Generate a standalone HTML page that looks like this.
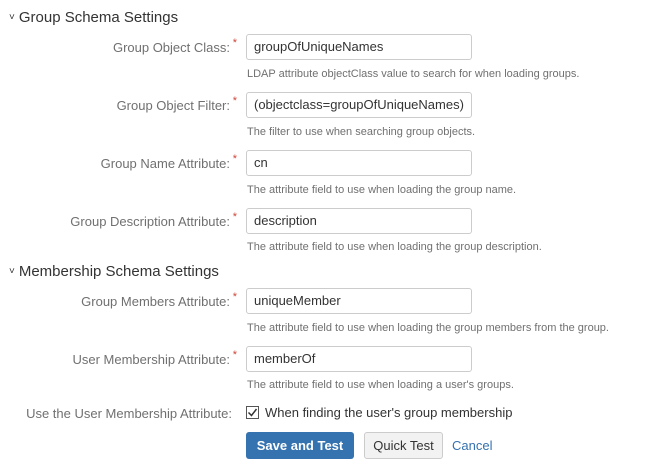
<!DOCTYPE html>
<html><head><style>
body{margin:0;width:659px;height:473px;background:#fff;font-family:"Liberation Sans",Arial,sans-serif;position:relative;overflow:hidden}
.h{position:absolute;left:9px;font-size:15px;color:#333}
.h span{font-size:10px;margin-right:4px;position:relative;top:-2px}
.l{position:absolute;right:429px;font-size:13px;color:#707070;text-align:right;white-space:nowrap}
.l sup{color:#d04437;font-size:11px;position:absolute;right:-7px;top:-3px}
.i{position:absolute;left:246px;width:217px;height:24px;border:1px solid #ccc;border-radius:3px;font-size:13px;color:#333;line-height:24px;padding-left:7px}
.d{position:absolute;left:247px;font-size:11px;color:#707070}
</style></head><body>
<div class="h" style="top:9px"><span>˅</span>Group Schema Settings</div>
<div class="l" style="top:40px">Group Object Class:<sup>*</sup></div>
<div class="i" style="top:34px">groupOfUniqueNames</div>
<div class="d" style="top:68px">LDAP attribute objectClass value to search for when loading groups.</div>
<div class="l" style="top:98px">Group Object Filter:<sup>*</sup></div>
<div class="i" style="top:92px">(objectclass=groupOfUniqueNames)</div>
<div class="d" style="top:126px">The filter to use when searching group objects.</div>
<div class="l" style="top:156px">Group Name Attribute:<sup>*</sup></div>
<div class="i" style="top:150px">cn</div>
<div class="d" style="top:184px">The attribute field to use when loading the group name.</div>
<div class="l" style="top:214px">Group Description Attribute:<sup>*</sup></div>
<div class="i" style="top:208px">description</div>
<div class="d" style="top:241px">The attribute field to use when loading the group description.</div>
<div class="h" style="top:263px"><span>˅</span>Membership Schema Settings</div>
<div class="l" style="top:294px">Group Members Attribute:<sup>*</sup></div>
<div class="i" style="top:288px">uniqueMember</div>
<div class="d" style="top:322px">The attribute field to use when loading the group members from the group.</div>
<div class="l" style="top:352px">User Membership Attribute:<sup>*</sup></div>
<div class="i" style="top:346px">memberOf</div>
<div class="d" style="top:379px">The attribute field to use when loading a user's groups.</div>
<div class="l" style="top:406px;right:427px">Use the User Membership Attribute:</div>
<svg style="position:absolute;left:246px;top:406px" width="13" height="13" viewBox="0 0 13 13"><rect x="0.5" y="0.5" width="12" height="12" fill="#fff" stroke="#555"/><path d="M2.5 6.5 L5.5 9.5 L10.5 3" fill="none" stroke="#333" stroke-width="1.5"/></svg>
<div style="position:absolute;left:265px;top:405px;font-size:13px;color:#333">When finding the user's group membership</div>
<div style="position:absolute;left:246px;top:432px;width:108px;height:27px;background:#3572b0;border-radius:3px;color:#fff;font-weight:bold;font-size:13px;line-height:27px;text-align:center">Save and Test</div>
<div style="position:absolute;left:364px;top:432px;width:77px;height:25px;background:#f2f2f2;border:1px solid #ccc;border-radius:3px;color:#333;font-size:13px;line-height:25px;text-align:center">Quick Test</div>
<div style="position:absolute;left:452px;top:438px;font-size:13px;color:#3572b0">Cancel</div>
</body></html>
